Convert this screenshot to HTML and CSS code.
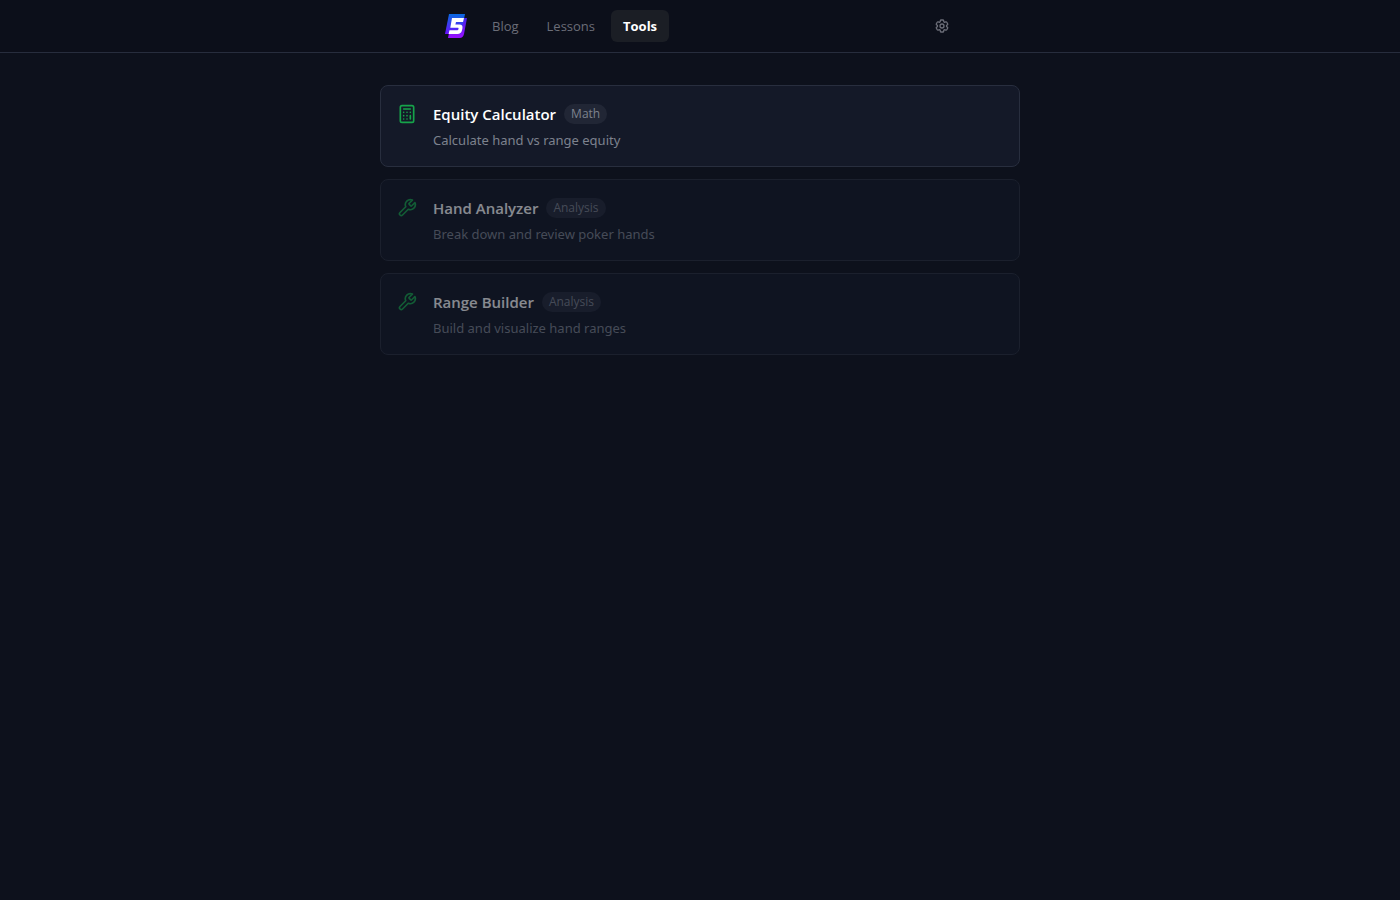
FILE: index.html
```
<!DOCTYPE html>
<html lang="en">

<head>
    <meta charset="UTF-8">
    <meta name="viewport" content="width=device-width, initial-scale=1.0">
    <title>Tools</title>
    <link rel="stylesheet" href="styles.css">
</head>

<body>
    <header class="topbar">
        <div class="topbar-inner">
            <a href="#" class="logo" aria-label="Home">
                <svg viewBox="0 0 24 24" width="24" height="24">
                    <defs>
                        <linearGradient id="logoBack" x1="0" y1="0" x2="0" y2="1">
                            <stop offset="0" stop-color="#0a6ae0" />
                            <stop offset="1" stop-color="#6a10ff" />
                        </linearGradient>
                        <linearGradient id="logoFront" x1="0" y1="0" x2="0" y2="1">
                            <stop offset="0" stop-color="#4422e8" />
                            <stop offset="1" stop-color="#9a10ff" />
                        </linearGradient>
                    </defs>
                    <path d="M8 4h15l-3 16c-.6 2.700-2 4-4.500 4H4z" fill="url(#logoFront)" />
                    <path d="M5 0h16l-4 20H1z" fill="url(#logoBack)" />
                    <path d="M8 4h12l-1 4h-7l-.6 2.500h4c2.500 0 3.600 1.500 3 4l-.4 1.800c-.6 2.500-2 3.700-4.500 3.700H4.600l.9-3.700H13c.8 0 1.200-.3 1.400-1l.1-.5c.2-.7-.1-1-.8-1H6.300z" fill="#fff" />
                </svg>
            </a>
            <nav>
                <a href="#">Blog</a>
                <a href="#">Lessons</a>
                <a href="#" class="active">Tools</a>
            </nav>
            <button type="button" class="settings" aria-label="Settings">
                <svg viewBox="0 0 24 24" width="16" height="16">
                    <path d="M9.594 3.94c.09-.542.56-.94 1.11-.94h2.593c.55 0 1.02.398 1.11.94l.213 1.281c.063.374.313.686.645.87.074.04.147.083.22.127.325.196.72.257 1.075.124l1.217-.456a1.125 1.125 0 0 1 1.37.49l1.296 2.247a1.125 1.125 0 0 1-.26 1.431l-1.003.827c-.293.241-.438.613-.43.992a7.723 7.723 0 0 1 0 .255c-.008.378.137.75.43.991l1.004.827c.424.35.534.955.26 1.43l-1.298 2.247a1.125 1.125 0 0 1-1.369.491l-1.217-.456c-.355-.133-.75-.072-1.076.124a6.47 6.47 0 0 1-.22.128c-.331.183-.581.495-.644.869l-.213 1.281c-.09.543-.56.94-1.11.94h-2.594c-.55 0-1.019-.398-1.11-.94l-.213-1.281c-.062-.374-.312-.686-.644-.87a6.52 6.52 0 0 1-.22-.127c-.325-.196-.72-.257-1.076-.124l-1.217.456a1.125 1.125 0 0 1-1.369-.49l-1.297-2.247a1.125 1.125 0 0 1 .26-1.431l1.004-.827c.292-.24.437-.613.43-.991a6.932 6.932 0 0 1 0-.255c.007-.38-.138-.751-.43-.992l-1.004-.827a1.125 1.125 0 0 1-.26-1.43l1.297-2.247a1.125 1.125 0 0 1 1.37-.491l1.216.456c.356.133.751.072 1.076-.124.072-.044.146-.086.22-.128.332-.183.582-.495.644-.869l.214-1.28Z" />
                    <circle cx="12" cy="12" r="3" />
                </svg>
            </button>
        </div>
    </header>

    <main>
        <a href="#" class="card">
            <svg class="card-icon" viewBox="0 0 24 24" width="20" height="20">
                <rect width="16" height="20" x="4" y="2" rx="2" />
                <path d="M8 6h8M16 14v4M16 10h.01M12 10h.01M8 10h.01M12 14h.01M8 14h.01M12 18h.01M8 18h.01" />
            </svg>
            <div>
                <div class="card-head">
                    <h2>Equity Calculator</h2>
                    <span class="tag">Math</span>
                </div>
                <p>Calculate hand vs range equity</p>
            </div>
        </a>

        <div class="card disabled">
            <svg class="card-icon" viewBox="0 0 24 24" width="20" height="20">
                <path d="M14.7 6.3a1 1 0 0 0 0 1.4l1.6 1.6a1 1 0 0 0 1.4 0l3.77-3.77a6 6 0 0 1-7.94 7.94l-6.91 6.91a2.12 2.12 0 0 1-3-3l6.91-6.91a6 6 0 0 1 7.94-7.94l-3.76 3.76z" />
            </svg>
            <div>
                <div class="card-head">
                    <h2>Hand Analyzer</h2>
                    <span class="tag">Analysis</span>
                </div>
                <p>Break down and review poker hands</p>
            </div>
        </div>

        <div class="card disabled">
            <svg class="card-icon" viewBox="0 0 24 24" width="20" height="20">
                <path d="M14.7 6.3a1 1 0 0 0 0 1.4l1.6 1.6a1 1 0 0 0 1.4 0l3.77-3.77a6 6 0 0 1-7.94 7.94l-6.91 6.91a2.12 2.12 0 0 1-3-3l6.91-6.91a6 6 0 0 1 7.94-7.94l-3.76 3.76z" />
            </svg>
            <div>
                <div class="card-head">
                    <h2>Range Builder</h2>
                    <span class="tag">Analysis</span>
                </div>
                <p>Build and visualize hand ranges</p>
            </div>
        </div>
    </main>
</body>

</html>
```

FILE: styles.css
```
* {
    box-sizing: border-box;
}

body {
    margin: 0;
    min-height: 100vh;
    font-family: "Segoe UI", "Open Sans", sans-serif;
    font-size: 13px;
    line-height: 20px;
    color: #fff;
    background-color: #0d111c;
}

a {
    color: inherit;
    text-decoration: none;
}

h2,
p {
    margin: 0;
}

svg {
    display: block;
}

.topbar {
    border-bottom: 1px solid #272d3d;
    background-color: #0c0f1a;
}

.topbar-inner {
    display: flex;
    align-items: center;
    max-width: 512px;
    height: 52px;
    margin: 0 auto;
}

nav {
    display: flex;
    gap: 4px;
    margin-left: 12px;
}

nav a {
    padding: 6px 12px;
    border-radius: 6px;
    color: #6b6d78;
}

nav a:hover {
    color: #fff;
}

nav a.active {
    background-color: #1b1e25;
    color: #fff;
    font-weight: 700;
}

.settings {
    margin-left: auto;
    padding: 6px;
    border: none;
    background: none;
    color: #6b6d78;
    cursor: pointer;
}

.settings svg,
.card-icon {
    fill: none;
    stroke: currentColor;
    stroke-width: 2;
    stroke-linecap: round;
    stroke-linejoin: round;
}

main {
    display: flex;
    flex-direction: column;
    gap: 12px;
    max-width: 640px;
    margin: 0 auto;
    padding: 32px 0;
}

.card {
    display: flex;
    gap: 16px;
    padding: 16px;
    border: 1px solid #282e3e;
    border-radius: 8px;
    background-color: #141928;
}

.card-icon {
    flex-shrink: 0;
    margin-top: 2px;
    color: #16a34a;
}

.card-head {
    display: flex;
    align-items: center;
    gap: 8px;
    margin-bottom: 4px;
}

.card h2 {
    font-size: 15px;
    line-height: 24px;
    font-weight: 600;
}

.tag {
    padding: 2px 7px;
    border-radius: 10px;
    background-color: #212635;
    color: #7d828e;
    font-size: 12px;
    line-height: 16px;
}

.card p {
    color: #7d828e;
    font-family: "Segoe UI", "Noto Sans", sans-serif;
}

.disabled {
    border-color: #1b202d;
    background-color: #0f1421;
}

.disabled .card-icon,
.disabled .card-head,
.disabled p {
    opacity: 0.5;
}
```
